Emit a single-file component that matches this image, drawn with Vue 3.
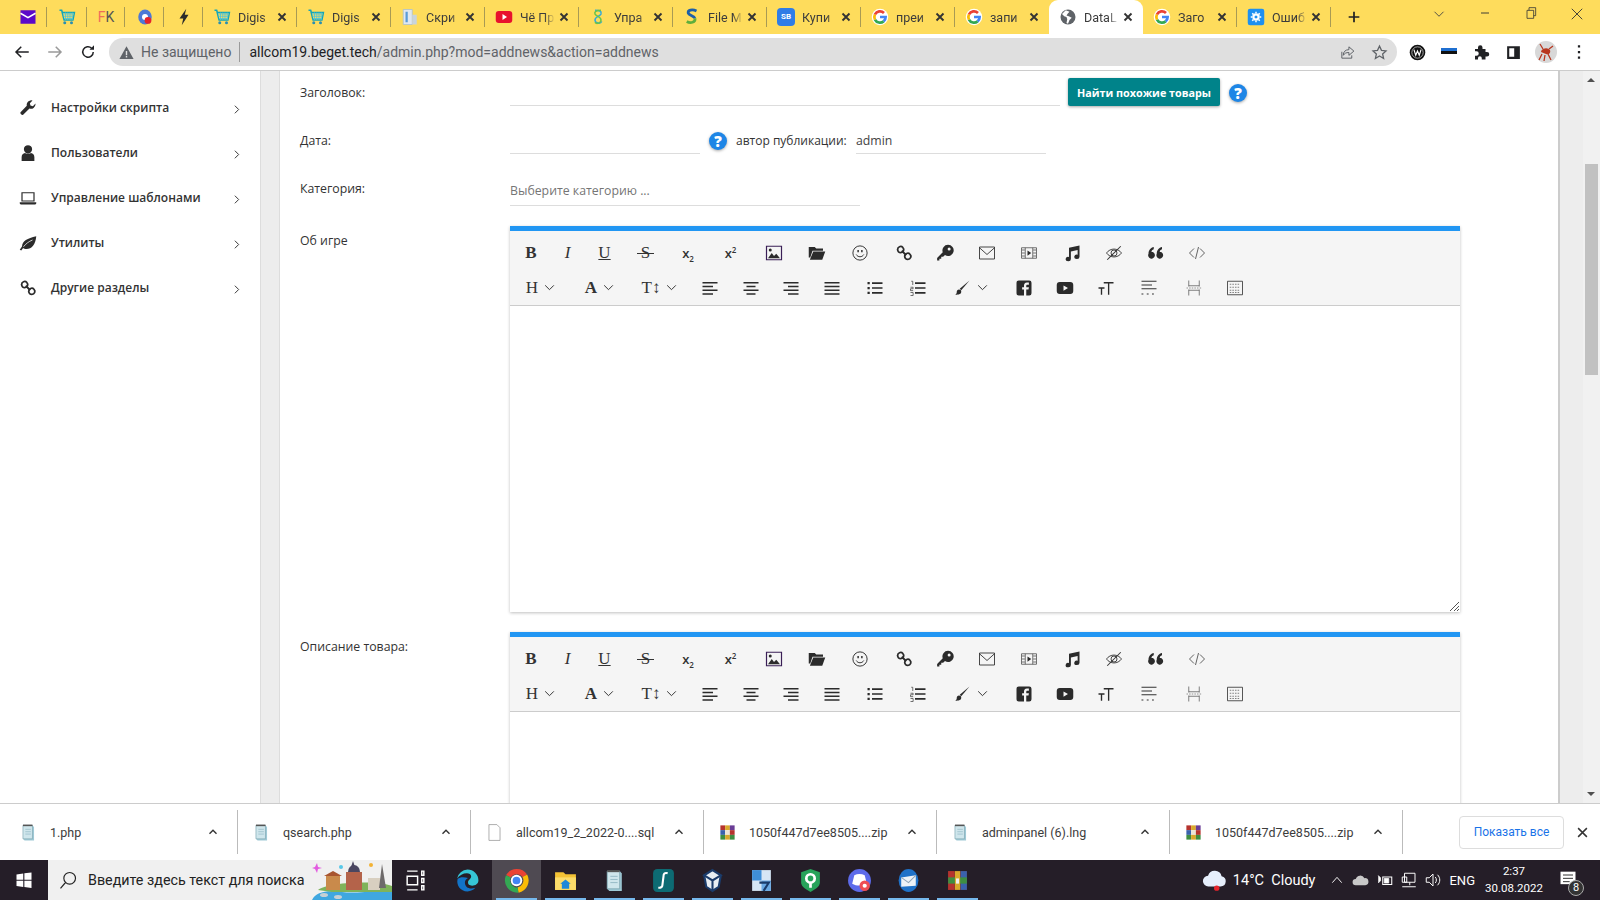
<script setup>
import { h } from 'vue'

const googleG = [
  { d: 'M12 1a11 11 0 1 1 0 22a11 11 0 0 1 0-22z', f: '#fff' },
  { d: 'M12 12h7.500a7.500 7.500 0 0 1-2.700 5.800', s: '#4285f4', w: 3.6 },
  { d: 'M16.800 17.800A7.500 7.500 0 0 1 5.300 15.400', s: '#34a853', w: 3.6 },
  { d: 'M5.300 15.400a7.500 7.500 0 0 1 0-6.800', s: '#fbbc05', w: 3.6 },
  { d: 'M5.300 8.600A7.500 7.500 0 0 1 17.300 6.700', s: '#ea4335', w: 3.6 }
]
const cart = [
  { d: 'M2 3h3l1 3h16l-2 10H8L5 4', s: '#12a5b8', w: 1.8 },
  { d: 'M7 8h14M7.500 11h13M8 14h12M10 6v10M13 6v10M16 6v10M19 6v10', s: '#4cc3d9', w: 1.1 },
  { d: 'M9 17.500a2 2 0 1 1 0 4a2 2 0 0 1 0-4zM18 17.500a2 2 0 1 1 0 4a2 2 0 0 1 0-4z', f: '#2b8fb0' }
]
const notepad = [
  { d: 'M5 3h12l2 2v17H7l-2-2z', f: '#9fc9d6' },
  { d: 'M5 3h12v17H5z', f: '#cfe6ec', s: '#7ba3af', w: 0.8 },
  { d: 'M5 3h12', s: '#555', w: 2 },
  { d: 'M8 8h7M8 11h7M8 14h7', s: '#8db3bf', w: 0.8 }
]
const rar = [
  { d: 'M3 3h6v6H3z', f: '#b5332e' }, { d: 'M9 3h6v6H9z', f: '#d9a92c' }, { d: 'M15 3h6v6h-6z', f: '#6a3d96' },
  { d: 'M3 9h6v6H3z', f: '#3a62ad' }, { d: 'M9 9h6v6H9z', f: '#ece6d6' }, { d: 'M15 9h6v6h-6z', f: '#b5332e' },
  { d: 'M3 15h6v6H3z', f: '#3e8e41' }, { d: 'M9 15h6v6H9z', f: '#d9a92c' }, { d: 'M15 15h6v6h-6z', f: '#3e8e41' }
]

// every icon is a list of path parts: f = fill, s = stroke, w = stroke width
const icons = {
  mail: [{ d: 'M2 3h20v18H2z', f: '#5b09c9' }, { d: 'M2 7l10 6 10-6', s: '#fff', w: 2 }],
  cart,
  meet: [
    { d: 'M12 2a9 10 0 1 1 0 20a9 10 0 0 1 0-20z', f: '#4d78d6' },
    { d: 'M12 8a4 4 0 1 1 0 8a4 4 0 0 1 0-8z', f: '#fff' },
    { d: 'M16 12a4.500 4.500 0 1 1 0 9a4.500 4.500 0 0 1 0-9z', f: '#e5232b' }
  ],
  bolt: [{ d: 'M15 1L6 14h5l-2 9 9-14h-5z', f: '#2b2b2b' }],
  doc: [
    { d: 'M3 2h12v20H3z', f: '#dfe7ef', s: '#a8bdd0', w: 1 },
    { d: 'M6 5h3v14H6z', f: '#5a9bd6' },
    { d: 'M15 9h6v13h-6z', f: '#c9d4dd' }
  ],
  yt: [{ d: 'M5 4h14a4 4 0 0 1 4 4v8a4 4 0 0 1-4 4H5a4 4 0 0 1-4-4V8a4 4 0 0 1 4-4z', f: '#e8112d' }, { d: 'M10 8l6 4-6 4z', f: '#fff' }],
  eight: [
    { d: 'M8 3c6 0 9 1 8 5c-1 3-8 3-8 8c0 4 7 6 9 2', s: '#2fa8e0', w: 2 },
    { d: 'M16 3c-7 0-9 2-8 5c1 3 8 3 8 8c0 4-6 6-8 3', s: '#6bc24a', w: 2 }
  ],
  sfile: [
    { d: 'M18 4C12 1 6 3 7 7c1 3 8 3 9 7', s: '#1c5fa8', w: 3.6 },
    { d: 'M16 14c1 5-6 7-11 4', s: '#5fae3c', w: 3.6 }
  ],
  google: googleG,
  globe: [
    { d: 'M12 2a10 10 0 1 1 0 20a10 10 0 0 1 0-20z', f: '#5f6368' },
    { d: 'M9 3l-5 5 3 3 3 1 1 3-1 5 2 1 2-5 3-3-4-2-3-1 2-3 2-2z', f: '#fff' }
  ],
  gear: [
    { d: 'M4 1h16a3 3 0 0 1 3 3v16a3 3 0 0 1-3 3H4a3 3 0 0 1-3-3V4a3 3 0 0 1 3-3z', f: '#1e90f0' },
    { d: 'M12 8.500a3.500 3.500 0 1 1 0 7a3.500 3.500 0 0 1 0-7z', s: '#fff', w: 3 },
    { d: 'M12 5v2M12 17v2M5 12h2M17 12h2M7 7l1.500 1.500M15.500 15.500L17 17M17 7l-1.500 1.500M8.500 15.500L7 17', s: '#fff', w: 2 }
  ],

  back: [{ d: 'M21 12H4M11 5l-7 7 7 7', s: '#202124', w: 2 }],
  forward: [{ d: 'M3 12h17M13 5l7 7-7 7', s: '#9a9a9a', w: 2 }],
  reload: [{ d: 'M19 12a7 7 0 1 1-2.200-5.100', s: '#202124', w: 2 }, { d: 'M20 3v6h-6z', f: '#202124' }],
  warn: [{ d: 'M12 3l10 18H2zM11 10v6h2v-6zM11 17v2h2v-2z', f: '#5f6368' }],
  share: [
    { d: 'M4 11v9h14v-4', s: '#5f6368', w: 1.4 },
    { d: 'M14 4l7 6-7 6v-4c-4 0-6 1-8 4c0-5 3-8 8-8z', s: '#5f6368', w: 1.4 }
  ],
  star: [{ d: 'M12 3l2.800 6 6.400.7-4.800 4.300 1.400 6.500L12 17l-5.800 3.500 1.400-6.500L2.800 9.700 9.200 9z', s: '#5f6368', w: 1.8 }],
  wext: [
    { d: 'M12 1a11 11 0 1 1 0 22a11 11 0 0 1 0-22z', f: '#111' },
    { d: 'M12 4a8 8 0 1 1 0 16a8 8 0 0 1 0-16z', s: '#ddd', w: 1 },
    { d: 'M7 8l2.500 8L12 10l2.500 6L17 8', s: '#fff', w: 1.6 }
  ],
  puzzle: [{ d: 'M4 8h4V6a3 3 0 0 1 6 0v2h4v4h2a3 3 0 0 1 0 6h-2v4h-5v-2a2.500 2.500 0 0 0-5 0v2H4v-5h2a3 3 0 0 0 0-6H4z', f: '#202124' }],
  panel: [{ d: 'M3 3h18v18H3zM6 6v12h7V6z', f: '#202124' }],
  dots: [{ d: 'M10.500 3h3v3h-3zM10.500 10.500h3v3h-3zM10.500 18h3v3h-3z', f: '#202124' }],
  bug: [
    { d: 'M12 1a11 11 0 1 1 0 22a11 11 0 0 1 0-22z', f: '#d8d8d8' },
    { d: 'M7 12a5 4 0 0 1 9-2c1 3-1 5-4 4z', f: '#b8371f' },
    { d: 'M8 14l-3 6M11 15l-1 6M14 14l3 6M15 9l4-3M9 9L6 4', s: '#b8371f', w: 1.3 }
  ],
  hide: [{ d: 'M6 9l6 6 6-6', s: '#444', w: 1.2 }],
  drop: [{ d: 'M4 8l8 8 8-8', s: '#333', w: 1.8 }],
  minimize: [{ d: 'M6 12h12', s: '#333', w: 1.4 }],
  restore: [{ d: 'M6 8h10v12H6zM9 8V4h10v12h-3', s: '#333', w: 1.2 }],
  close: [{ d: 'M5 5l14 14M19 5L5 19', s: '#333', w: 1.2 }],
  tabx: [{ d: 'M6 6l12 12M18 6L6 18', s: '#333', w: 3.2 }],
  plus: [{ d: 'M12 4v16M4 12h16', s: '#202124', w: 2.6 }],

  wrench: [{ d: 'M22 7a6 6 0 0 1-8 5.600L6.500 20a2.500 2.500 0 1 1-3.500-3.500l7.400-7.500A6 6 0 0 1 18 2l-3.500 3.500.8 3.200 3.200.8L22 6z', f: '#2b2b2b' }],
  user: [{ d: 'M12 1.500a5.500 5.500 0 1 1 0 11a5.500 5.500 0 0 1 0-11zM3.500 22.500v-5c0-3 2-5 4.500-5.500c2.500 1.500 5.500 1.500 8 0c2.500.5 4.500 2.500 4.500 5.500v5z', f: '#2b2b2b' }],
  laptop: [{ d: 'M4 5h16v11H4z', s: '#2b2b2b', w: 1.6 }, { d: 'M1 17.500h22V19a1.500 1.500 0 0 1-1.500 1.500h-19A1.500 1.500 0 0 1 1 19z', f: '#2b2b2b' }],
  leaf: [{ d: 'M23 3c-1 11-6 17-13 17c-2 0-3.500-.5-4.500-1.500L3 22l-2-1 3-4.500C4.500 9 11 6 23 3z', f: '#2b2b2b' }, { d: 'M6 17c3-4 7-7 12-9', s: '#fff', w: 1 }],
  link: [
    { d: 'M3.500 7.500a4 4 0 0 1 7-2.800a4 4 0 0 1-2.800 6.800a4 4 0 0 1-4.200-4z', s: '#2b2b2b', w: 2.4 },
    { d: 'M13 16.500a4 4 0 0 1 7-2.800a4 4 0 0 1-2.800 6.800a4 4 0 0 1-4.200-4z', s: '#2b2b2b', w: 2.4 },
    { d: 'M9 9l6 6', s: '#2b2b2b', w: 2.4 }
  ],

  image: [{ d: 'M2 3h20v18H2z', s: '#3a1f56', w: 1.6 }, { d: 'M4 19l5-7 3 4 3-3 5 6z', f: '#2b2b2b' }, { d: 'M7 6a2 2 0 1 1 0 4a2 2 0 0 1 0-4z', f: '#2b2b2b' }],
  folder: [{ d: 'M1 4h8l2 2h9v3H6l-3 9H1zM7 10h16l-4 11H2.500z', f: '#2b2b2b' }],
  smile: [{ d: 'M12 2.500a9.500 9.500 0 1 1 0 19a9.500 9.500 0 0 1 0-19z', s: '#333', w: 1.3 }, { d: 'M8.500 8h2v3h-2zM13.500 8h2v3h-2z', f: '#333' }, { d: 'M7 14c2 4 8 4 10 0', s: '#333', w: 1.3 }],
  key: [{ d: 'M16 1a7.500 7.500 0 1 1-4 13.800L9.500 17H7v2.500H4.500V22H1.500v-3.500L9 11A7.500 7.500 0 0 1 16 1zm1.500 3.500a2 2 0 1 0 0 4a2 2 0 0 0 0-4z', f: '#2b2b2b' }],
  envelope: [{ d: 'M2 4h20v16H2z', s: '#333', w: 1.2 }, { d: 'M2 5l10 9 10-9', s: '#333', w: 1.2 }],
  film: [{ d: 'M2 5h20v14H2z', s: '#555', w: 1.1 }, { d: 'M7 5v14M17 5v14', s: '#555', w: 1.1 }, { d: 'M2.500 8h4M2.500 12h4M2.500 16h4M17.500 8h4M17.500 12h4M17.500 16h4', s: '#555', w: 1.1 }, { d: 'M10 8.500l5 3.500-5 3.500z', f: '#2b2b2b' }],
  music: [{ d: 'M8 5l14-3v15a3.500 3 0 1 1-2.500-2.800V8L10.500 10v10a3.500 3 0 1 1-2.500-2.800z', f: '#2b2b2b' }],
  eyeoff: [{ d: 'M2 12c5-7 15-7 20 0c-5 7-15 7-20 0z', s: '#333', w: 1.2 }, { d: 'M12 8a4 4 0 1 1 0 8a4 4 0 0 1 0-8z', s: '#333', w: 1.2 }, { d: 'M3 21L21 3', s: '#333', w: 1.4 }],
  quote: [{ d: 'M2 13c0-5 3-8 7-9v3c-2 .7-3 2-3 3.500a4.500 4.500 0 1 1-4 2.500zM13 13c0-5 3-8 7-9v3c-2 .7-3 2-3 3.500a4.500 4.500 0 1 1-4 2.500z', f: '#2b2b2b' }],
  code: [{ d: 'M8 6l-6 6 6 6M16 6l6 6-6 6M14 4l-4 16', s: '#444', w: 1.1 }],
  left: [{ d: 'M2 5h20M2 10h14M2 15h20M2 20h14', s: '#2b2b2b', w: 2.2 }],
  center: [{ d: 'M2 5h20M6 10h12M2 15h20M6 20h12', s: '#2b2b2b', w: 2.2 }],
  right: [{ d: 'M2 5h20M8 10h14M2 15h20M8 20h14', s: '#2b2b2b', w: 2.2 }],
  justify: [{ d: 'M2 5h20M2 10h20M2 15h20M2 20h20', s: '#2b2b2b', w: 2.2 }],
  ul: [{ d: 'M2 4h3v3H2zM2 10.500h3v3H2zM2 17h3v3H2z', f: '#2b2b2b' }, { d: 'M8 5.500h14M8 12h14M8 18.500h14', s: '#2b2b2b', w: 2.2 }],
  ol: [{ d: 'M3 3h2v5M2 11h3.500v2H2v2.500h3.500M2 18h3.500v4H2', s: '#444', w: 1 }, { d: 'M8 5.500h14M8 12h14M8 18.500h14', s: '#2b2b2b', w: 2.2 }],
  brush: [{ d: 'M22 2L11 15l-2-2z', f: '#2b2b2b' }, { d: 'M8 14c2 0 3 1 3 3c0 3-3 4-8 4c2-1 2-3 2-4s1-3 3-3z', f: '#2b2b2b' }],
  fb: [{ d: 'M5 2h14a3 3 0 0 1 3 3v14a3 3 0 0 1-3 3h-4v-8h3l.5-3H15V9c0-1 .5-1.500 1.500-1.500H18.500V4.500H16c-3 0-4 2-4 4V11H9.500v3H12v8H5a3 3 0 0 1-3-3V5a3 3 0 0 1 3-3z', f: '#2b2b2b' }],
  ytb: [{ d: 'M5 4h14a4 4 0 0 1 4 4v8a4 4 0 0 1-4 4H5a4 4 0 0 1-4-4V8a4 4 0 0 1 4-4zM10 8.500v7l6-3.500z', f: '#2b2b2b' }],
  tt: [{ d: 'M9 5h13M15.500 5v16M2 12h8M6 12v9', s: '#2b2b2b', w: 1.8 }],
  para: [{ d: 'M2 3h20M2 8h14M2 13h20', s: '#333', w: 1.4 }, { d: 'M2 20h2.500M9 20h2.500M16 20h2.500', s: '#333', w: 1.6 }],
  hr: [{ d: 'M5 2v8M19 2v8M5 22v-8M19 22v-8M5 9h14M5 15h14', s: '#555', w: 1 }, { d: 'M2 12h20', s: '#777', w: 1, dash: '2 1.500' }],
  table: [{ d: 'M2 3h20v18H2z', s: '#333', w: 1.1 }, { d: 'M5 7h14M5 11h14M5 15h14M5 18h14', s: '#555', w: 1, dash: '2 1.500' }],

  win: [{ d: 'M2 4.500l9-1.200V11.500H2zM12.500 3.100L22 2v9.500h-9.500zM2 13h9v8.200l-9-1.200zM12.500 13H22v9.500l-9.500-1.300z', f: '#fff' }],
  search: [{ d: 'M14 3a7 7 0 1 1 0 14a7 7 0 0 1 0-14zM9 15l-6 7', s: '#222', w: 1.4 }],
  taskview: [{ d: 'M4 3h10M4 21h10M4 8h10v8H4zM18 3h2v4h-2zM18 10h2v4h-2zM18 17h2v4h-2z', s: '#fff', w: 1.4 }],
  edge: [
    { d: 'M12 1.500a10.500 10.500 0 0 1 10.500 10.500c0 3-3 5-6 5c-3 0-4-1.500-4-3c0-3 3-3 3-6c0-2-2-3-4-3c-4 0-7 2-9.500 5A10.500 10.500 0 0 1 12 1.500z', f: '#36c5d6' },
    { d: 'M2.500 10.500C1 16 5 22.500 12 22.500c3 0 6-1.500 7.500-3.500c-5 2-10 0-10-5c0-2 1-3.500 3-4.500c-4-1-8-1-10 1z', f: '#1273c7' }
  ],
  chrome: [
    { d: 'M4.200 8A9.500 9.500 0 0 1 20 7.400', s: '#ea4335', w: 5 },
    { d: 'M20 7.400a9.500 9.500 0 0 1-6.500 13.800', s: '#fbbc05', w: 5 },
    { d: 'M13.500 21.200A9.500 9.500 0 0 1 4.200 8', s: '#34a853', w: 5 },
    { d: 'M12 6.500a5.500 5.500 0 1 1 0 11a5.500 5.500 0 0 1 0-11z', f: '#fff' },
    { d: 'M12 8.300a3.700 3.700 0 1 1 0 7.400a3.700 3.700 0 0 1 0-7.400z', f: '#4285f4' }
  ],
  explorer: [{ d: 'M2 4h8l2 2h10v15H2z', f: '#f3c235' }, { d: 'M2 9h20v12H2z', f: '#fbdc6a' }, { d: 'M12 11l5 4h-1.500v5h-7v-5H7z', f: '#1e88d8' }],
  notepad,
  sublime: [{ d: 'M6 1h12a4 4 0 0 1 4 4v14a4 4 0 0 1-4 4H6a4 4 0 0 1-4-4V5a4 4 0 0 1 4-4z', f: '#0d6b73' }, { d: 'M16 5c-3-1-4 1-4 3l-1 8c0 2-1 3-4 3', s: '#fff', w: 2 }],
  vbox: [{ d: 'M12 2l8 5-2 11-6 4-6-4-2-11z', f: '#e8eef3' }, { d: 'M12 2l8 5-8 5-8-5zM12 12v10', s: '#1b3c6b', w: 2 }, { d: 'M4 7l2 11 6 4 6-4 2-11', s: '#1b3c6b', w: 2 }],
  win7: [{ d: 'M3 2h18v20H3z', f: '#d6e6f5' }, { d: 'M3 2h9v10H3z', f: '#3f8fd8' }, { d: 'M12 12h9v10h-9z', f: '#6aa9e4' }, { d: 'M10 14h9l-5 8', s: '#1b3c6b', w: 2 }],
  shield: [{ d: 'M3 4l9-3 9 3v10c0 4-5 7-9 9c-4-2-9-5-9-9z', f: '#27a35a' }, { d: 'M12 6a4 4 0 1 1 0 8a4 4 0 0 1 0-8zM12 14v5', s: '#fff', w: 2.6 }],
  discord: [
    { d: 'M12 1a11 11 0 1 1 0 22a11 11 0 0 1 0-22z', f: '#5d6bea' },
    { d: 'M7 7c3-1.500 7-1.500 10 0l2 8c-4 2.500-10 2.500-14 0z', f: '#fff' },
    { d: 'M17 12a5 5 0 1 1 0 10a5 5 0 0 1 0-10z', f: '#ee4d55' },
    { d: 'M17 15a2 2 0 1 1 0 4a2 2 0 0 1 0-4z', f: '#fff' }
  ],
  mailapp: [{ d: 'M12 1a9.500 11 0 1 1 0 22a9.500 11 0 0 1 0-22z', f: '#1f72c8' }, { d: 'M5 9l14-2v10L5 18z', f: '#eef3f7' }, { d: 'M5 9l7 5 7-7', s: '#8da4b8', w: 1 }],
  winrar: [
    { d: 'M3 3h18v18H3z', f: '#7a2f2c' }, { d: 'M3 3h6v18H3z', f: '#b5332e' }, { d: 'M15 3h6v18h-6z', f: '#3a62ad' },
    { d: 'M3 9h18v6H3z', f: '#3e8e41' }, { d: 'M9.500 3h5v18h-5z', f: '#d9a92c' }, { d: 'M10.500 10h3v5h-3z', f: '#eee' }
  ],
  rar,
  file: [{ d: 'M5 2h10l4 4v16H5z', f: '#fff', s: '#9a9a9a', w: 1 }],
  caret: [{ d: 'M6 15l6-6 6 6', s: '#333', w: 2.4 }],
  cross: [{ d: 'M5 5l14 14M19 5L5 19', s: '#333', w: 2.4 }],
  chevron: [{ d: 'M9 5l7 7-7 7', s: '#333', w: 1.8 }],

  cloud: [
    { d: 'M7 18a5 5 0 0 1-.5-10A6.500 6.500 0 0 1 19 8.500a4.800 4.800 0 0 1-1 9.500z', f: '#e6eefb' },
    { d: 'M14.500 17a2.500 2.500 0 1 1 0 5a2.500 2.500 0 0 1 0-5z', f: '#e5232b' }
  ],
  up: [{ d: 'M5 16l7-8 7 8', s: '#fff', w: 1.4 }],
  onedrive: [{ d: 'M6 18a4 4 0 0 1 0-8a6 6 0 0 1 11-1a4.500 4.500 0 0 1 1 9z', f: '#c8c8c8' }],
  power: [{ d: 'M9 8h12v10H9z', s: '#fff', w: 1.4 }, { d: 'M11 10h6v6h-6zM3 6l3 3v4l-3 3', f: '#fff', s: '#fff', w: 1 }],
  net: [{ d: 'M6 3h14v12H6zM13 15v4M3 21h18M3 8h6v7H3z', s: '#fff', w: 1.3 }],
  sound: [{ d: 'M3 9h4l5-5v16l-5-5H3z', s: '#fff', w: 1.3 }, { d: 'M15 8c2 2 2 6 0 8M18 5c4 4 4 10 0 14', s: '#fff', w: 1.3 }],
  notify: [{ d: 'M3 2h18v15H3z', f: '#fff' }, { d: 'M6 6h12M6 10h12M6 14h8', s: '#333', w: 1.2 }]
}

const Ico = (props) =>
  h('svg', { viewBox: '0 0 24 24', width: props.size || 16, height: props.size || 16, class: 'ico' },
    icons[props.name].map((p) =>
      h('path', {
        d: p.d,
        fill: p.f || 'none',
        stroke: p.s || 'none',
        'stroke-width': p.w || 1,
        'stroke-dasharray': p.dash,
        'fill-rule': 'evenodd'
      })
    )
  )
Ico.props = ['name', 'size']

const pinnedTabs = [
  { icon: 'mail', w: 39 },
  { icon: 'cart', w: 40 },
  { fk: true, w: 38 },
  { icon: 'meet', w: 39 },
  { icon: 'bolt', w: 39 }
]

const tabs = [
  { icon: 'cart', title: 'Digis' },
  { icon: 'cart', title: 'Digis' },
  { icon: 'doc', title: 'Скри' },
  { icon: 'yt', title: 'Чё Пр' },
  { icon: 'eight', title: 'Упра' },
  { icon: 'sfile', title: 'File M' },
  { sb: true, title: 'Купи' },
  { icon: 'google', title: 'преи' },
  { icon: 'google', title: 'запи' },
  { icon: 'globe', title: 'DataL', active: true },
  { icon: 'google', title: 'Заго' },
  { icon: 'gear', title: 'Ошиб' }
]

const menu = [
  { icon: 'wrench', label: 'Настройки скрипта' },
  { icon: 'user', label: 'Пользователи' },
  { icon: 'laptop', label: 'Управление шаблонами' },
  { icon: 'leaf', label: 'Утилиты' },
  { icon: 'link', label: 'Другие разделы' }
]

const topTools = [
  { text: 'B', cls: 'serif bold', w: 38 },
  { text: 'I', cls: 'serif italic', w: 35 },
  { text: 'U', cls: 'serif under', w: 39 },
  { text: 'S', cls: 'serif strike', w: 43 },
  { text: 'x', sub: '2', w: 42 },
  { text: 'x', sup: '2', w: 43 },
  { icon: 'image', w: 44 },
  { icon: 'folder', w: 42 },
  { icon: 'smile', w: 44 },
  { icon: 'link', w: 43 },
  { icon: 'key', w: 40 },
  { icon: 'envelope', w: 43 },
  { icon: 'film', w: 42 },
  { icon: 'music', w: 43 },
  { icon: 'eyeoff', w: 42 },
  { icon: 'quote', w: 41 },
  { icon: 'code', w: 42 }
]

const bottomTools = [
  { text: 'H', cls: 'serif', menu: true, w: 58 },
  { text: 'A', cls: 'serif bold', menu: true, w: 60 },
  { text: 'T↕', cls: 'serif', menu: true, w: 60 },
  { icon: 'left', w: 40 },
  { icon: 'center', w: 41 },
  { icon: 'right', w: 40 },
  { icon: 'justify', w: 42 },
  { icon: 'ul', w: 44 },
  { icon: 'ol', w: 41 },
  { icon: 'brush', menu: true, w: 65 },
  { icon: 'fb', w: 42 },
  { icon: 'ytb', w: 40 },
  { icon: 'tt', w: 41 },
  { icon: 'para', w: 46 },
  { icon: 'hr', w: 44 },
  { icon: 'table', w: 38 }
]

const editors = [
  { label: 'Об игре' },
  { label: 'Описание товара:' }
]

const downloads = [
  { icon: 'notepad', name: '1.php' },
  { icon: 'notepad', name: 'qsearch.php' },
  { icon: 'file', name: 'allcom19_2_2022-0....sql' },
  { icon: 'rar', name: '1050f447d7ee8505....zip' },
  { icon: 'notepad', name: 'adminpanel (6).lng' },
  { icon: 'rar', name: '1050f447d7ee8505....zip' }
]

const taskApps = [
  { icon: 'taskview' },
  { icon: 'edge' },
  { icon: 'chrome', running: true, active: true },
  { icon: 'explorer', running: true },
  { icon: 'notepad', running: true },
  { icon: 'sublime', running: true },
  { icon: 'vbox', running: true },
  { icon: 'win7', running: true },
  { icon: 'shield', running: true },
  { icon: 'discord', running: true },
  { icon: 'mailapp', running: true },
  { icon: 'winrar', running: true }
]
</script>

<template>
  <div class="screen">
    <header class="tabstrip">
      <div v-for="(t, i) in pinnedTabs" :key="i" class="tab pinned" :style="{ width: t.w + 'px' }">
        <span v-if="t.fk" class="fk"><i>F</i>K</span>
        <Ico v-else :name="t.icon" :size="18" />
      </div>
      <div
        v-for="(t, i) in tabs"
        :key="'t' + i"
        class="tab"
        :class="{ active: t.active, beforeActive: i === 8 }"
      >
        <span v-if="t.sb" class="sb">SB</span>
        <Ico v-else :name="t.icon" :size="18" />
        <span class="tab-title">{{ t.title }}</span>
        <Ico name="tabx" :size="14" class="tab-close" />
      </div>
      <Ico name="plus" :size="16" class="newtab" />
      <div class="window-btns">
        <Ico name="hide" :size="18" />
        <Ico name="minimize" :size="16" />
        <Ico name="restore" :size="16" />
        <Ico name="close" :size="18" />
      </div>
    </header>

    <nav class="toolbar">
      <Ico name="back" :size="18" class="nav first-nav" />
      <Ico name="forward" :size="18" class="nav" />
      <Ico name="reload" :size="18" class="nav" />
      <div class="omnibox">
        <Ico name="warn" :size="17" />
        <span class="insecure">Не защищено</span>
        <span class="url"><b>allcom19.beget.tech</b>/admin.php?mod=addnews&amp;action=addnews</span>
        <Ico name="share" :size="17" class="share" />
        <Ico name="star" :size="17" class="star" />
      </div>
      <div class="extensions">
        <Ico name="wext" :size="17" />
        <span class="flag"></span>
        <Ico name="puzzle" :size="18" />
        <Ico name="panel" :size="17" />
        <Ico name="bug" :size="24" />
        <Ico name="dots" :size="18" />
      </div>
    </nav>

    <div class="viewport">
      <aside class="sidebar">
        <a v-for="m in menu" :key="m.label" class="menu-item">
          <Ico :name="m.icon" :size="18" />
          <span class="menu-label">{{ m.label }}</span>
          <Ico name="chevron" :size="13" class="menu-arrow" />
        </a>
      </aside>
      <div class="gutter"></div>

      <main class="content">
        <div class="row row-title">
          <label>Заголовок:</label>
          <input class="field wide" type="text" />
          <button class="teal-btn">Найти похожие товары</button>
          <span class="help">?</span>
        </div>
        <div class="row row-date">
          <label>Дата:</label>
          <input class="field date" type="text" />
          <span class="help">?</span>
          <span class="author">автор публикации:</span>
          <input class="field date" type="text" value="admin" />
        </div>
        <div class="row row-cat">
          <label>Категория:</label>
          <input class="field cat" type="text" placeholder="Выберите категорию ..." />
        </div>

        <div v-for="e in editors" :key="e.label" class="row row-editor">
          <label>{{ e.label }}</label>
          <div class="editor">
            <div class="tools">
              <div class="tool-row">
                <span v-for="(t, i) in topTools" :key="i" class="tool" :style="{ width: t.w + 'px' }">
                  <Ico v-if="t.icon" :name="t.icon" :size="18" />
                  <span v-else class="tool-text" :class="t.cls">{{ t.text }}<sub v-if="t.sub">{{ t.sub }}</sub><sup v-if="t.sup">{{ t.sup }}</sup></span>
                </span>
              </div>
              <div class="tool-row">
                <span v-for="(t, i) in bottomTools" :key="i" class="tool" :style="{ width: t.w + 'px' }">
                  <Ico v-if="t.icon" :name="t.icon" :size="18" />
                  <span v-else class="tool-text" :class="t.cls">{{ t.text }}</span>
                  <Ico v-if="t.menu" name="drop" :size="13" class="tool-menu" />
                </span>
              </div>
            </div>
            <div class="editor-body">
              <svg class="grip" viewBox="0 0 10 10" width="10" height="10">
                <path d="M1 10L10 1M5 10l5-5M8 10l2-2" stroke="#555" fill="none" />
              </svg>
            </div>
          </div>
        </div>
      </main>

      <div class="rightstrip"></div>
      <div class="scrollbar">
        <span class="arrow up"></span>
        <span class="thumb"></span>
        <span class="arrow down"></span>
      </div>
    </div>

    <section class="shelf">
      <div v-for="(d, i) in downloads" :key="i" class="download">
        <Ico :name="d.icon" :size="19" class="dl-icon" />
        <span class="dl-name">{{ d.name }}</span>
        <Ico name="caret" :size="14" class="dl-caret" />
      </div>
      <button class="show-all">Показать все</button>
      <Ico name="cross" :size="15" class="shelf-close" />
    </section>

    <footer class="taskbar">
      <div class="start"><Ico name="win" :size="18" /></div>
      <div class="searchbox">
        <Ico name="search" :size="20" />
        <span class="search-text">Введите здесь текст для поиска</span>
        <svg class="search-art" viewBox="0 0 80 40" width="80" height="40">
          <path d="M0 40c4-8 14-10 30-8c14 2 30-2 50 0v8z" fill="#3fa7e0" />
          <path d="M6 30c10-8 60-10 74-4v6H20z" fill="#7fb35a" />
          <path d="M14 16h14v14H14z" fill="#c98a4b" />
          <path d="M12 16l9-5 9 5z" fill="#a8552f" />
          <path d="M34 12h16v18H34z" fill="#b4634a" />
          <path d="M36 12a6 7 0 0 1 12 0z" fill="#4a4660" />
          <path d="M41 1l2 6h-4z" fill="#4a4660" />
          <path d="M56 18h12v12H56z" fill="#d8cfc0" />
          <path d="M70 4l4 24h-7z" fill="#6d6a6a" />
          <path d="M3 8l2-4 1 4 4 1-4 1-1 4-2-4-3-1z" transform="translate(0 -1)" fill="#e25be0" />
          <path d="M29 5a2 2 0 1 1 0 4a2 2 0 0 1 0-4z" fill="#58c8e8" />
          <path d="M59 3a2 2 0 1 1 0 4a2 2 0 0 1 0-4z" fill="#f2b233" />
          <path d="M8 35a4 2 0 1 1 8 0a4 2 0 0 1-8 0zM22 37a4 2 0 1 1 8 0a4 2 0 0 1-8 0z" fill="#c6d0d4" />
        </svg>
      </div>
      <div class="apps">
        <div v-for="a in taskApps" :key="a.icon" class="app" :class="{ running: a.running, on: a.active }">
          <Ico :name="a.icon" :size="25" />
        </div>
      </div>
      <div class="tray">
        <Ico name="cloud" :size="26" />
        <span class="weather">14°C&nbsp; Cloudy</span>
        <Ico name="up" :size="16" />
        <Ico name="onedrive" :size="19" />
        <Ico name="power" :size="18" />
        <Ico name="net" :size="18" />
        <Ico name="sound" :size="18" />
        <span class="lang">ENG</span>
        <div class="clock"><span>2:37</span><span>30.08.2022</span></div>
        <div class="notify">
          <Ico name="notify" :size="20" />
          <span class="notify-count">8</span>
        </div>
      </div>
    </footer>
  </div>
</template>

<style>
html, body { margin: 0; overflow: hidden; }
</style>

<style scoped>
.screen {
  width: 1600px;
  height: 900px;
  display: flex;
  flex-direction: column;
  overflow: hidden;
  font-family: "Open Sans", "Noto Sans", sans-serif;
  color: #333;
  background: #fff;
}
.ico { display: block; flex: none; }

/* tabs */
.tabstrip {
  height: 34px;
  flex: none;
  display: flex;
  padding-left: 8px;
  background: #fedc5c;
  font-family: "Roboto", "Noto Sans", sans-serif;
  font-size: 12.5px;
}
.tab {
  position: relative;
  width: 94px;
  flex: none;
  display: flex;
  align-items: center;
  box-sizing: border-box;
  padding-left: 10px;
  color: #3c3c3c;
}
.tab::after {
  content: "";
  position: absolute;
  right: 0;
  top: 7px;
  height: 20px;
  width: 1px;
  background: #a89a54;
}
.tab.pinned { justify-content: center; padding-left: 0; }
.tab.active { background: #fff; border-radius: 9px 9px 0 0; }
.tab.active::after, .tab.beforeActive::after { display: none; }
.tab-title {
  margin-left: 7px;
  width: 35px;
  overflow: hidden;
  white-space: nowrap;
  -webkit-mask-image: linear-gradient(to right, #000 70%, transparent);
  mask-image: linear-gradient(to right, #000 70%, transparent);
}
.tab-close { margin-left: 2px; }
.fk { font-size: 14px; color: #555; }
.fk i { font-style: normal; color: #ef6c5a; }
.sb {
  width: 18px;
  height: 18px;
  border-radius: 4px;
  background: #2f7de6;
  color: #fff;
  font-size: 8px;
  font-weight: 700;
  text-align: center;
  line-height: 18px;
}
.newtab { margin-left: 15px; margin-top: 9px; }
.window-btns {
  margin-left: auto;
  width: 184px;
  display: grid;
  grid-template-columns: repeat(4, 46px);
  justify-items: center;
  padding-top: 5px;
  align-items: start;
}

/* address bar */
.toolbar {
  height: 36px;
  flex: none;
  display: flex;
  align-items: center;
  background: #fff;
}
.nav { margin-right: 15px; }
.first-nav { margin-left: 13px; }
.omnibox {
  width: 1288px;
  height: 28px;
  margin-left: -3px;
  box-sizing: border-box;
  padding-left: 9px;
  border-radius: 14px;
  background: #dfdfdf;
  display: flex;
  align-items: center;
  font-family: "Roboto", "Noto Sans", sans-serif;
  font-size: 14px;
  color: #5f6368;
}
.insecure {
  margin-left: 6px;
  padding-right: 8px;
  line-height: 20px;
  border-right: 1px solid #9a9a9a;
}
.url { margin-left: 9px; }
.url b { font-weight: 400; color: #202124; }
.share { margin-left: auto; }
.star { margin-left: 15px; margin-right: 9px; }
.extensions {
  flex: 1;
  display: grid;
  grid-template-columns: 32px 32px 32px 32px 33px 33px;
  padding-left: 4px;
  justify-items: center;
  align-items: center;
}
.flag {
  width: 16px;
  height: 9px;
  background: linear-gradient(#1f6fd0 33%, #111 33%, #111 66%, #fff 66%);
}

/* page */
.viewport {
  flex: 1;
  min-height: 0;
  display: flex;
  border-top: 1px solid #ccc;
  overflow: hidden;
}
.sidebar {
  width: 261px;
  flex: none;
  box-sizing: border-box;
  padding-top: 14px;
  border-right: 1px solid #ddd;
}
.gutter { width: 18px; flex: none; background: #ededed; }
.menu-item {
  height: 45px;
  display: flex;
  align-items: center;
  padding: 0 17px 0 19px;
  font-size: 12px;
  font-weight: 600;
  color: #333;
}
.menu-label { margin-left: 14px; }
.menu-arrow { margin-left: auto; margin-top: 3px; }
.content {
  width: 1281px;
  flex: none;
  box-sizing: border-box;
  padding-left: 20px;
  border-left: 1px solid #ddd;
  border-right: 2px solid #ccc;
  font-size: 12.3px;
}
.row {
  display: flex;
  align-items: flex-start;
}
.row > label {
  width: 210px;
  flex: none;
  line-height: 20px;
  padding-top: 12px;
}
.row-date { margin-top: 13px; }
.row-cat { margin-top: 17px; }
.row-cat > label { padding-top: 8px; }
.row-editor { margin-top: 20px; }
.row-editor > label { padding-top: 5px; }
.field {
  height: 35px;
  box-sizing: border-box;
  padding: 8px 0 0;
  border: 0;
  border-bottom: 1px solid #ddd;
  outline: none;
  background: transparent;
  font: inherit;
  color: #444;
}
.field::placeholder { color: #757575; opacity: 1; }
.wide { width: 550px; }
.date { width: 190px; }
.cat { width: 350px; padding-top: 4px; }
.teal-btn {
  margin: 7px 0 0 8px;
  width: 152px;
  height: 28px;
  padding: 0;
  border: 0;
  border-radius: 2px;
  background: #00838a;
  color: #fff;
  font: 700 10.8px "Open Sans", sans-serif;
  box-shadow: 0 1px 3px rgba(0, 0, 0, 0.35);
}
.help {
  width: 18px;
  height: 18px;
  flex: none;
  margin-top: 13px;
  border-radius: 50%;
  background: #1e86e6;
  color: #fff;
  font: 800 15px/18px "Open Sans", sans-serif;
  text-align: center;
  box-shadow: 0 1px 3px rgba(0, 0, 0, 0.35);
}
.row-title .help { margin-left: 9px; }
.row-date .help { margin-left: 9px; }
.author {
  width: 120px;
  flex: none;
  margin: 12px 0 0 9px;
  font-size: 12px;
  line-height: 20px;
  white-space: nowrap;
}

/* editor */
.editor {
  width: 950px;
  flex: none;
  box-sizing: border-box;
  border-top: 5px solid #2196f3;
  box-shadow: 0 1px 3px rgba(0, 0, 0, 0.25);
}
.tools {
  height: 70px;
  padding: 4px 0 0 2px;
  background: #f5f5f5;
  border-bottom: 1px solid #ccc;
}
.tool-row { height: 35px; display: flex; align-items: center; }
.tool {
  flex: none;
  display: flex;
  align-items: center;
  justify-content: center;
}
.tool-text { font-size: 13px; font-weight: 600; color: #333; line-height: 16px; }
.tool-text sub, .tool-text sup { font-size: 8px; line-height: 0; }
.serif { font: 400 17px/18px "Liberation Serif", serif; color: #333; }
.bold { font-weight: 700; }
.italic { font-style: italic; }
.under { text-decoration: underline; }
.strike { position: relative; }
.strike::after {
  content: "";
  position: absolute;
  left: -4px;
  right: -4px;
  top: 9px;
  height: 1px;
  background: #333;
}
.tool-menu { margin-left: 5px; }
.editor-body {
  position: relative;
  height: 306px;
  background: #fff;
}
.grip { position: absolute; right: 1px; bottom: 1px; }

/* scrollbars */
.rightstrip { width: 23px; flex: none; background: #ededed; }
.scrollbar {
  position: relative;
  width: 17px;
  flex: none;
  background: #f1f1f1;
}
.thumb {
  position: absolute;
  left: 2px;
  top: 93px;
  width: 13px;
  height: 211px;
  background: #c1c1c1;
}
.arrow {
  position: absolute;
  left: 4px;
  border-left: 4px solid transparent;
  border-right: 4px solid transparent;
}
.arrow.up { top: 7px; border-bottom: 4px solid #505050; }
.arrow.down { bottom: 7px; border-top: 4px solid #505050; }

/* downloads */
.shelf {
  height: 56px;
  flex: none;
  display: flex;
  align-items: center;
  padding-left: 5px;
  border-top: 1px solid #ccc;
  font-family: "Roboto", "Noto Sans", sans-serif;
  font-size: 12.5px;
  color: #3c3c3c;
}
.download {
  width: 233px;
  height: 44px;
  flex: none;
  box-sizing: border-box;
  display: flex;
  align-items: center;
  padding-left: 14px;
  border-right: 1px solid #bbb;
}
.dl-name { margin-left: 12px; white-space: nowrap; }
.dl-caret { margin-left: auto; margin-right: 17px; }
.show-all {
  width: 105px;
  height: 33px;
  margin-left: 56px;
  padding: 0;
  border: 1px solid #ddd;
  border-radius: 4px;
  background: #fff;
  color: #1a73e8;
  font: 12px "Roboto", "Noto Sans", sans-serif;
}
.shelf-close { margin-left: 11px; }

/* windows taskbar */
.taskbar {
  height: 40px;
  flex: none;
  display: flex;
  background: #251e28;
  color: #fff;
  font-family: "Roboto", "Noto Sans", sans-serif;
}
.start {
  width: 48px;
  flex: none;
  display: flex;
  align-items: center;
  justify-content: center;
}
.searchbox {
  position: relative;
  width: 344px;
  flex: none;
  box-sizing: border-box;
  display: flex;
  align-items: center;
  padding-left: 10px;
  background: #f0f0f0;
  color: #222;
  font-size: 14.3px;
}
.search-text { margin-left: 10px; white-space: nowrap; }
.search-art { position: absolute; right: 0; top: 0; }
.apps { display: flex; margin-left: 2px; }
.app {
  position: relative;
  width: 49px;
  display: flex;
  align-items: center;
  justify-content: center;
}
.app:first-child { padding-right: 6px; box-sizing: border-box; }
.app.on { background: #4f4a52; }
.app.running::after {
  content: "";
  position: absolute;
  left: 4px;
  right: 4px;
  bottom: 0;
  height: 2px;
  background: #76b9ed;
}
.tray {
  margin-left: auto;
  display: flex;
  align-items: center;
  gap: 6px;
  padding-right: 22px;
  font-size: 13px;
}
.weather { font-size: 14.5px; margin-right: 8px; }
.lang { margin-left: 1px; font-size: 13px; }
.clock {
  width: 76px;
  margin-left: -5px;
  display: flex;
  flex-direction: column;
  align-items: center;
  font-size: 11.5px;
  line-height: 17px;
}
.notify { position: relative; }
.notify-count {
  position: absolute;
  right: -6px;
  bottom: -6px;
  width: 16px;
  height: 16px;
  border-radius: 50%;
  background: #333;
  border: 1px solid #aaa;
  box-sizing: border-box;
  font-size: 11px;
  line-height: 14px;
  text-align: center;
}
</style>
